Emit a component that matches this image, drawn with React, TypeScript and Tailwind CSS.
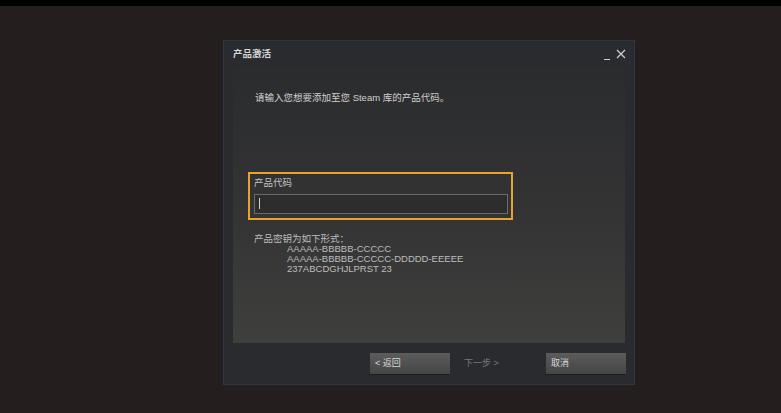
const cjk = '"Liberation Sans", "Noto Sans CJK SC", sans-serif';

function KeyFormats() {
  const formats = ['AAAAA-BBBBB-CCCCC', 'AAAAA-BBBBB-CCCCC-DDDDD-EEEEE', '237ABCDGHJLPRST 23'];
  return (
    <div className="mt-[14px] ml-[6px] text-[9.5px] leading-[10px] text-[#bdbdbd]">
      <div>产品密钥为如下形式：</div>
      <div className="pl-[33px]">
        {formats.map((f) => (
          <div key={f}>{f}</div>
        ))}
      </div>
    </div>
  );
}

function DialogButton({ label }: { label: string }) {
  return (
    <button className="flex h-[21px] w-[80px] items-center bg-gradient-to-b from-[#5c5c5c] to-[#454545] px-[5px] text-[9px] text-[#d8d8d8] shadow-[0_1px_0_#1c1c1c]">
      {label}
    </button>
  );
}

export default function App() {
  return (
    <div className="h-[413px] w-[781px] overflow-hidden bg-[#241f1e]" style={{ fontFamily: cjk }}>
      <div className="h-[6px] bg-black" />
      <div className="pl-[223px] pt-[34px]">
        {/* product activation dialog */}
        <div className="flex h-[345px] w-[412px] flex-col border border-[#2e3744] bg-[#2a2b2e]">
          <div className="flex h-[27px] items-center justify-between bg-gradient-to-b from-[#272b31] to-[#2a2b2e] pl-[9px] pr-[8px]">
            <span className="text-[9.5px] font-bold text-[#d6d6d6]">产品激活</span>
            <div className="flex items-end gap-[6px] text-[#cfcfcf]">
              <span className="mb-[1px] block h-[1px] w-[6px] bg-[#cfcfcf]" />
              <svg width="10" height="10" viewBox="0 0 10 10" className="mb-[2px]">
                <path d="M1 1l8 8M9 1L1 9" stroke="currentColor" strokeWidth="1.2" />
              </svg>
            </div>
          </div>

          <div className="mx-[9px] flex h-[275px] flex-col bg-gradient-to-b from-[#2b2c2e] via-[#333334] to-[#3f3f3d] pl-[15px]">
            <p className="mt-[23px] pl-[7px] text-[9.5px] text-[#d0d0d0]">
              请输入您想要添加至您 Steam 库的产品代码。
            </p>

            <div className="mt-[67px] flex h-[48px] w-[265px] flex-col border-2 border-[#e8a22f] px-[4px]">
              <label className="mt-[2px] text-[9.5px] text-[#c4c4c4]">产品代码</label>
              <div className="mt-[3px] flex h-[20px] w-[254px] items-center border border-[#6a6a6a] bg-[#2d2d2d] pl-[4px]">
                <span className="block h-[11px] w-[1px] bg-[#d0d0d0]" />
              </div>
            </div>

            <KeyFormats />
          </div>

          <div className="mt-[10px] flex items-center pl-[146px]">
            <DialogButton label="< 返回" />
            <span className="ml-[14px] text-[9px] text-[#777777]">下一步 &gt;</span>
            <div className="ml-auto mr-[8px]">
              <DialogButton label="取消" />
            </div>
          </div>
        </div>
      </div>
    </div>
  );
}
